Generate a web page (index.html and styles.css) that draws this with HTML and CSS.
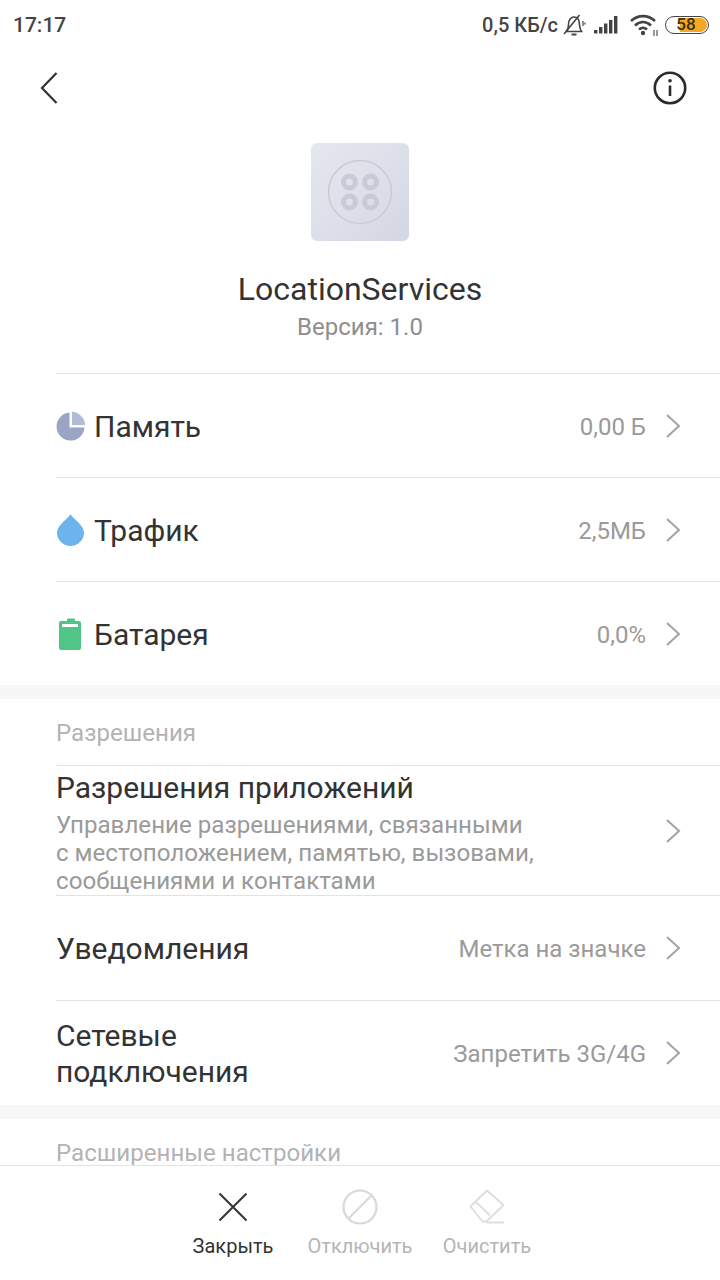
FILE: index.html
```html
<!DOCTYPE html>
<html>
<head>
<meta name="viewport" content="width=device-width, initial-scale=1">
<link rel="stylesheet" href="styles.css">
</head>
<body>
<div class="screen">

  <div class="status">
    <span class="time">17:17</span>
    <div class="status-right">
      <span class="speed">0,5 КБ/с</span>
      <svg class="ic-bell" width="24" height="24" viewBox="0 0 24 24" fill="none" stroke="#444" stroke-width="1.600">
        <path d="M4.500 18.500c1.500-2 2-4 2-7C6.500 7 9 4 12 4s5 2.500 5.300 6c.2 3 .5 6 2.200 8.500z"/>
        <path d="M9.500 21.500h5" stroke-width="2"/>
        <path d="M2 21L17.500 2"/>
        <path d="M21 8v5M23 9.500v2" stroke-width="1.200"/>
      </svg>
      <svg class="ic-signal" width="26" height="20" viewBox="0 0 26 20" fill="#444">
        <rect x="1" y="15" width="3.400" height="3.500"/>
        <rect x="6" y="12" width="3.400" height="6.500"/>
        <rect x="11" y="8.500" width="3.400" height="10"/>
        <rect x="16" y="5" width="3.400" height="13.500"/>
        <rect x="21" y="1" width="3.400" height="17.500"/>
      </svg>
      <svg class="ic-wifi" width="30" height="24" viewBox="0 0 30 24" fill="none" stroke="#444" stroke-width="2.600">
        <path d="M1 8C8 1.500 18 1.500 25 8"/>
        <path d="M5 12.500c5-4.500 11-4.500 16 0"/>
        <path d="M9 16.500c3-2.500 5-2.500 8 0"/>
        <circle cx="13" cy="20" r="2.200" fill="#444" stroke="none"/>
        <path d="M24 17v6M27 17v6" stroke-width="1.100"/>
      </svg>
      <div class="battery"><div class="battery-fill"></div><span>58</span></div>
    </div>
  </div>

  <div class="topbar">
    <svg width="20" height="34" viewBox="0 0 20 34" fill="none" stroke="#333" stroke-width="2.200"><path d="M17.500 2L3 17l14.500 15"/></svg>
    <svg width="34" height="34" viewBox="0 0 34 34" fill="none" stroke="#2b2b2b" stroke-width="2.600">
      <circle cx="17" cy="17" r="15.200"/>
      <path d="M17 14.500v10.500"/>
      <circle cx="17" cy="9.800" r="1.800" fill="#2b2b2b" stroke="none"/>
    </svg>
  </div>

  <div class="app">
    <div class="app-icon">
      <svg width="66" height="66" viewBox="0 0 66 66" fill="none" stroke="#c8cbd6">
        <circle cx="33" cy="33" r="31.500" stroke-width="1.500"/>
        <circle cx="22.500" cy="23" r="6" stroke-width="5"/>
        <circle cx="43.500" cy="23" r="6" stroke-width="5"/>
        <circle cx="22.500" cy="43" r="6" stroke-width="5"/>
        <circle cx="43.500" cy="43" r="6" stroke-width="5"/>
      </svg>
    </div>
    <div class="app-name">LocationServices</div>
    <div class="app-version">Версия: 1.0</div>
  </div>

  <div class="usage">
    <div class="usage-row">
      <svg class="usage-icon" width="30" height="30" viewBox="0 0 30 30">
        <path d="M13.500 1.600A14 14 0 1 0 28.500 16.500H13.500z" fill="#9aa5c6"/>
        <path d="M16 .8A14 14 0 0 1 29.200 14H16z" fill="#b2bbd6"/>
      </svg>
      <span class="usage-label">Память</span>
      <span class="value">0,00 Б</span>
      <svg class="chev" width="16" height="26" viewBox="0 0 16 26" fill="none" stroke="#a3a3a3" stroke-width="2"><path d="M2 2l12 11L2 24"/></svg>
    </div>
    <div class="usage-row">
      <svg class="usage-icon" width="30" height="32" viewBox="1 0 30 32">
        <path d="M15.500 0C18 5 29 11 29 18.500a13.500 13.500 0 0 1-27 0C2 11 13 5 15.500 0z" fill="#6cb4ec"/>
      </svg>
      <span class="usage-label">Трафик</span>
      <span class="value">2,5МБ</span>
      <svg class="chev" width="16" height="26" viewBox="0 0 16 26" fill="none" stroke="#a3a3a3" stroke-width="2"><path d="M2 2l12 11L2 24"/></svg>
    </div>
    <div class="usage-row">
      <svg class="usage-icon" width="30" height="32" viewBox="1 0 30 32">
        <path d="M12 1.500a1 1 0 0 1 1-1h6a1 1 0 0 1 1 1V3h4a2 2 0 0 1 2 2v25a2 2 0 0 1-2 2H6a2 2 0 0 1-2-2V5a2 2 0 0 1 2-2h6z" fill="#4fc685"/>
        <rect x="7" y="6" width="16" height="3" fill="#fff"/>
      </svg>
      <span class="usage-label">Батарея</span>
      <span class="value">0,0%</span>
      <svg class="chev" width="16" height="26" viewBox="0 0 16 26" fill="none" stroke="#a3a3a3" stroke-width="2"><path d="M2 2l12 11L2 24"/></svg>
    </div>
  </div>

  <div class="gap"></div>

  <div class="section-title">Разрешения</div>

  <div class="row row-perm">
    <div class="row-text">
      <div class="row-title">Разрешения приложений</div>
      <div class="row-desc">Управление разрешениями, связанными<br>с местоположением, памятью, вызовами,<br>сообщениями и контактами</div>
    </div>
    <svg class="chev" width="16" height="26" viewBox="0 0 16 26" fill="none" stroke="#a3a3a3" stroke-width="2"><path d="M2 2l12 11L2 24"/></svg>
  </div>
  <div class="row row-notif">
    <div class="row-text"><div class="row-title">Уведомления</div></div>
    <span class="value">Метка на значке</span>
    <svg class="chev" width="16" height="26" viewBox="0 0 16 26" fill="none" stroke="#a3a3a3" stroke-width="2"><path d="M2 2l12 11L2 24"/></svg>
  </div>
  <div class="row row-net">
    <div class="row-text"><div class="row-title">Сетевые<br>подключения</div></div>
    <span class="value">Запретить 3G/4G</span>
    <svg class="chev" width="16" height="26" viewBox="0 0 16 26" fill="none" stroke="#a3a3a3" stroke-width="2"><path d="M2 2l12 11L2 24"/></svg>
  </div>

  <div class="gap"></div>

  <div class="section-title section-cut">Расширенные настройки</div>

  <div class="bottom">
    <div class="action">
      <svg width="36" height="36" viewBox="0 0 36 36" fill="none" stroke="#333" stroke-width="2"><path d="M4.500 4.500l27 27M31.500 4.500l-27 27"/></svg>
      <span>Закрыть</span>
    </div>
    <div class="action off">
      <svg width="36" height="36" viewBox="0 0 36 36" fill="none" stroke="#d8d8d8" stroke-width="2.200"><circle cx="18" cy="18" r="16.500"/><path d="M7 29L29 7"/></svg>
      <span>Отключить</span>
    </div>
    <div class="action off">
      <svg width="36" height="36" viewBox="0 0 36 36" fill="none" stroke="#dedede" stroke-width="2" stroke-linejoin="round"><path d="M1.500 17.500L18 1.500l16.500 14.500-17 16.500h-4z"/><path d="M6.500 12.500l14.500 14"/><path d="M18 33.500h17"/></svg>
      <span>Очистить</span>
    </div>
  </div>

</div>
</body>
</html>
```

FILE: styles.css
```css
* {
  box-sizing: border-box;
}

html, body {
  margin: 0;
  padding: 0;
  background-color: #fff;
}

.screen {
  width: 720px;
  height: 1280px;
  overflow: hidden;
  display: flex;
  flex-direction: column;
  font-family: Roboto, "Noto Sans", sans-serif;
  color: #333;
}

.status {
  height: 50px;
  flex: none;
  display: flex;
  align-items: center;
  justify-content: space-between;
  padding: 0 11px 0 13px;
  color: #444;
  font-size: 20px;
  font-weight: 500;
}

.time {
  font-size: 21px;
}

.status-right {
  display: flex;
  align-items: center;
}

.speed {
  margin-right: 4px;
}

.ic-signal {
  margin-left: 7px;
}

.ic-wifi {
  margin-left: 11px;
}

.battery {
  position: relative;
  width: 44px;
  height: 18px;
  margin-left: 5px;
  border: 1.500px solid #444;
  border-radius: 9px;
  padding: 1px;
  display: flex;
}

.battery-fill {
  width: 27px;
  margin-left: auto;
  background-color: #f5a623;
  border-radius: 0 7px 7px 0;
}

.battery span {
  position: absolute;
  left: 0;
  right: 2px;
  top: -3px;
  text-align: center;
  font-size: 17px;
  line-height: 21px;
  color: #3a3000;
}

.topbar {
  height: 76px;
  flex: none;
  display: flex;
  align-items: center;
  justify-content: space-between;
  padding: 0 33px 0 39px;
}

.app {
  flex: none;
  height: 247px;
  padding-top: 17px;
  display: flex;
  flex-direction: column;
  align-items: center;
}

.app-icon {
  width: 98px;
  height: 98px;
  border-radius: 6px;
  background: linear-gradient(135deg, #e6e8f0, #d4d7e3);
  display: flex;
  align-items: center;
  justify-content: center;
}

.app-name {
  margin-top: 28px;
  font-size: 32px;
  line-height: 40px;
  color: #333;
}

.app-version {
  margin-top: 3px;
  font-size: 24px;
  line-height: 30px;
  color: #8e8e8e;
}

.usage {
  margin-left: 56px;
  flex: none;
}

.usage-row {
  height: 104px;
  border-top: 1px solid #e3e3e3;
  display: flex;
  align-items: center;
  padding-right: 39px;
}

.usage-icon {
  flex: none;
}

.usage-label {
  margin-left: 8px;
  flex: 1;
  font-size: 30px;
  line-height: 38px;
  padding-top: 2px;
}

.value {
  font-size: 24px;
  line-height: 30px;
  padding-top: 2px;
  color: #9a9a9a;
  margin-right: 19px;
}

.chev {
  flex: none;
}

.gap {
  height: 14px;
  flex: none;
  background-color: #f7f7f7;
}

.section-title {
  flex: none;
  height: 66px;
  margin-left: 56px;
  padding-top: 19px;
  font-size: 24.1px;
  line-height: 30px;
  color: #b3b3b3;
}

.section-cut {
  height: 46px;
}

.row {
  flex: none;
  margin-left: 56px;
  border-top: 1px solid #e3e3e3;
  display: flex;
  align-items: center;
  padding-right: 39px;
}

.row-perm {
  height: 130px;
}

.row-notif {
  height: 105px;
}

.row-net {
  height: 105px;
}

.row-text {
  flex: 1;
  padding-top: 2px;
}

.row-perm .row-text {
  padding-top: 4px;
}

.row-title {
  font-size: 30px;
  line-height: 36px;
  color: #333;
}

.row-desc {
  margin-top: 5px;
  font-size: 24.15px;
  line-height: 28px;
  color: #9a9a9a;
}

.bottom {
  height: 115px;
  flex: none;
  background-color: #fff;
  border-top: 1px solid #e3e3e3;
  display: flex;
  justify-content: center;
  padding-top: 23px;
  position: relative;
  z-index: 1;
}

.action {
  width: 127px;
  display: flex;
  flex-direction: column;
  align-items: center;
  font-size: 20px;
  color: #333;
}

.action span {
  margin-top: 8px;
  line-height: 26px;
}

.action.off {
  color: #b5b5b5;
}
```
